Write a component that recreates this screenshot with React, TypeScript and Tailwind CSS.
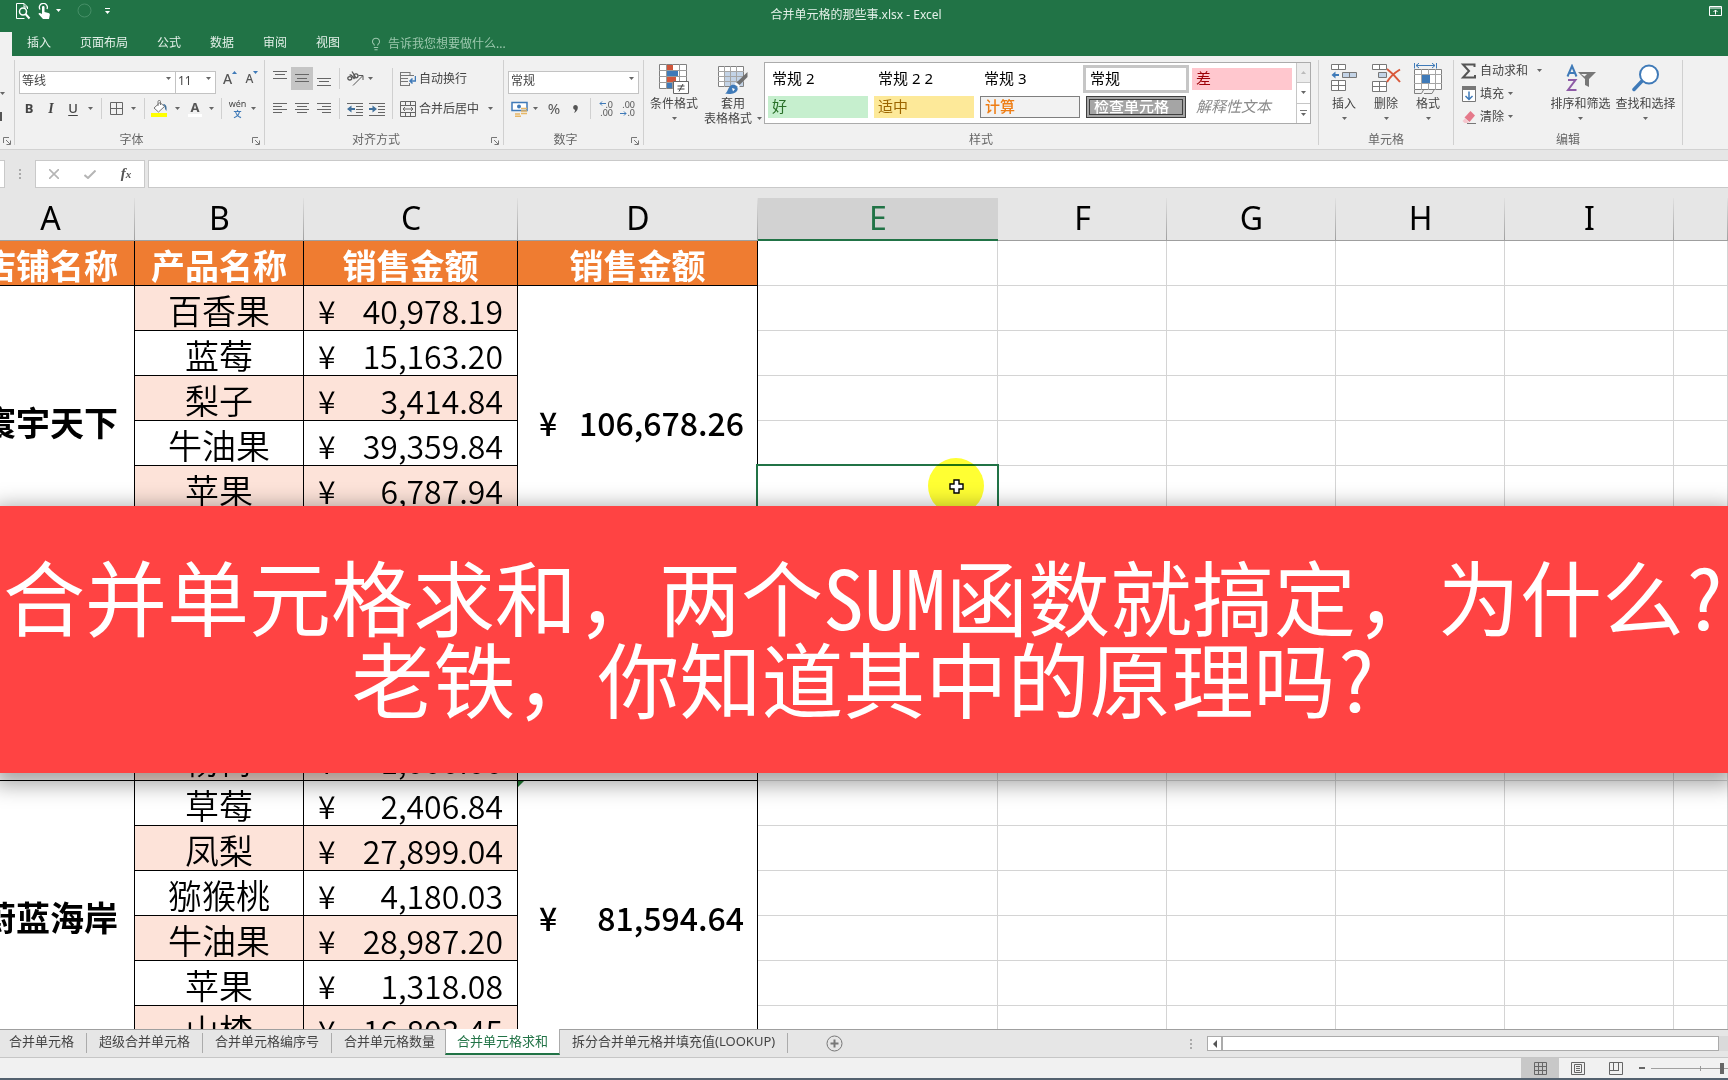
import type { ReactNode } from "react";
import { Lightbulb } from "lucide-react";

/* ---------- shared bits ---------- */

function Caret({ className = "text-[#666]" }: { className?: string }) {
  return (
    <svg width="5" height="3" viewBox="0 0 5 3" className={`shrink-0 ${className}`} aria-hidden="true">
      <path d="M0 0h5L2.5 3z" fill="currentColor" />
    </svg>
  );
}

function Tool({ label, className, children }: { label: string; className: string; children: ReactNode }) {
  return (
    <button type="button" aria-label={label} className={`flex h-[23px] shrink-0 items-center justify-center ${className}`}>
      {children}
    </button>
  );
}

const Divider = ({ className = "" }: { className?: string }) => (
  <div className={`my-px w-px shrink-0 self-stretch bg-[#d0d0d0] ${className}`} />
);

const GroupEdge = () => <div className="mt-1 mb-1 w-px shrink-0 bg-[#d0d0d0]" />;

function Group({
  label,
  launcher = false,
  className,
  children,
}: {
  label: string;
  launcher?: boolean;
  className: string;
  children: ReactNode;
}) {
  return (
    <section aria-label={label} className={`flex shrink-0 flex-col ${className}`}>
      <div className="flex-1">{children}</div>
      <div className={`relative mb-px h-4 text-center text-xs leading-4 text-[#666] ${launcher ? "pr-4" : ""}`}>
        {label}
        {launcher && (
          <button type="button" aria-label={`${label}设置`} className="absolute right-1 bottom-[3px]">
            <Launcher />
          </button>
        )}
      </div>
    </section>
  );
}

function Launcher() {
  return (
    <svg width="8" height="8" viewBox="0 0 8 8" fill="none" stroke="#777" aria-hidden="true">
      <path d="M.5 6V.5H6M3 3l4 4M7.5 3.5v4h-4" />
    </svg>
  );
}

function Drop({ label, value, options, className }: { label: string; value: string; options: string[]; className: string }) {
  return (
    <div className={`relative h-[23px] shrink-0 ${className}`}>
      <select
        aria-label={label}
        defaultValue={value}
        className="h-full w-full appearance-none border border-[#c3c3c3] bg-white pb-[2px] pl-[2px] text-xs text-[#444] outline-none"
      >
        {options.map((o) => (
          <option key={o}>{o}</option>
        ))}
      </select>
      <span className="pointer-events-none absolute top-[10px] right-[5px] flex">
        <Caret />
      </span>
    </div>
  );
}

function BigTool({ lines, width, icon }: { lines: string[]; width: string; icon: ReactNode }) {
  return (
    <button type="button" className={`flex shrink-0 flex-col items-center pt-2 text-xs leading-[15px] text-[#444] ${width}`}>
      <span className="mb-[2px] flex h-[30px] items-start justify-center">{icon}</span>
      <span className="whitespace-nowrap">{lines[0]}</span>
      <span className="flex h-[15px] items-center gap-[5px] whitespace-nowrap">
        {lines[1]}
        <Caret />
      </span>
    </button>
  );
}

/* ---------- icons ---------- */

function Lines({ rows }: { rows: [number, number, number][] }) {
  return (
    <svg width="14" height="15" viewBox="0 0 14 15" stroke="#666" aria-hidden="true">
      {rows.map(([y, a, b]) => (
        <path key={y} d={`M${a} ${y}.5H${b}`} />
      ))}
    </svg>
  );
}

function IndentIcon({ flip = false }: { flip?: boolean }) {
  return (
    <svg width="17" height="14" viewBox="0 0 17 14" fill="none" aria-hidden="true">
      <path d="M0 1.5h16M9 4.5h7M9 7.5h7M9 10.5h7M0 13.5h16" stroke="#666" />
      {flip ? (
        <path d="M0 6h3.500V3.500L8 7l-4.500 3.500V8H0z" fill="#41719c" />
      ) : (
        <path d="M8 6H4.500V3.500L0 7l4.500 3.500V8H8z" fill="#41719c" />
      )}
    </svg>
  );
}

function CondFormatIcon() {
  return (
    <svg width="30" height="30" viewBox="0 0 30 30" aria-hidden="true">
      <path d="M.5.5h27v24H.5z" fill="#fff" stroke="#808080" />
      <path d="M7.500 0v25M13.500 0v25M20.500 0v25M0 6.500h28M0 12.500h28M0 18.500h28" stroke="#9a9a9a" fill="none" />
      <path d="M8 1h6v5H8zM8 13h9v5H8z" fill="#d0563b" />
      <path d="M8 7h11v5H8zM8 19h5v5H8z" fill="#3f7ab8" />
      <path d="M14.500 17.500h15v12h-15z" fill="#fff" stroke="#666" />
      <path d="M18.500 22h7M18.500 25h7M24 20l-4 7.500" stroke="#444" fill="none" />
    </svg>
  );
}

function TableFormatIcon() {
  return (
    <svg width="30" height="30" viewBox="0 0 30 30" aria-hidden="true">
      <path d="M.5 2.500h25v20H.5z" fill="#fff" stroke="#808080" />
      <path d="M7 8h18v14H7z" fill="#c3d3e6" />
      <path d="M6.500 2v21M12.500 2v21M18.500 2v21M0 7.500h26M0 12.500h26M0 17.500h26" stroke="#a5a5a5" fill="none" />
      <path d="M29.500 8v5l-8 8-3-2.500z" fill="#707070" />
      <path d="M18 18.500l4 3.500-1.500 1.500-4-3.500z" fill="#fff" />
      <path d="M7 29.500c3-1 2.500-6 6.500-8.500 4-1 7 2 6 5-1.500 4-8 4.500-12.500 3.500z" fill="#3f7ab8" />
      <path d="M14 24l3 1-2 2.500z" fill="#fff" />
    </svg>
  );
}

function InsertIcon() {
  return (
    <svg width="28" height="28" viewBox="0 0 28 28" aria-hidden="true">
      <path d="M1.500.5h14v5h-14zM8.500.5v5M1.500 16.500h14v10h-14zM8.500 16.500v10M1.500 21.500h14" fill="#fff" stroke="#777" />
      <path d="M12.500 8.500h14v5h-14zM19.500 8.500v5" fill="#c3d3e6" stroke="#777" />
      <path d="M1.500 11l4-3.500v2.500H9v2H5.500v2.500z" fill="#3f7ab8" />
    </svg>
  );
}

function DeleteIcon() {
  return (
    <svg width="30" height="29" viewBox="0 0 30 29" aria-hidden="true">
      <path d="M1.500.5h14v5h-14zM8.500.5v5M1.500 17.500h14v10h-14zM8.500 17.500v10M1.500 22.500h14" fill="#fff" stroke="#777" />
      <path d="M7.500 8.500h8v5h-8z" fill="#c3d3e6" stroke="#777" />
      <path d="M16 5c4 3 9 8 13 13M29 5.500C24 8.500 19 13 16 18" fill="none" stroke="#d9593b" strokeWidth="2" />
    </svg>
  );
}

function FormatIcon() {
  return (
    <svg width="28" height="31" viewBox="0 0 28 31" className="-mt-px" fill="none" aria-hidden="true">
      <path d="M.5 0v5.500M22.500 0v5.500M2 2.500h19M5 .2L2 2.500l3 2.500M18 .2l3 2.300-3 2.500" stroke="#3f7ab8" />
      <path d="M.5 6.500h27v20H.5z" fill="#fff" stroke="#808080" />
      <path d="M7.500 6v21M14.500 6v21M21.500 6v21M0 11.500h28M0 20.500h28" stroke="#a5a5a5" />
      <path d="M8 12h8v8H8z" fill="#3f7ab8" />
      <path d="M.5 27v3.500h7l2-3.500M10 30.500h8l2-3.500" stroke="#808080" />
    </svg>
  );
}

function SortFilterIcon() {
  return (
    <svg width="30" height="28" viewBox="0 0 30 28" fill="none" aria-hidden="true">
      <path d="M1.500 12.500L6 2l4.500 10.500M3.200 9h5.800" stroke="#3f7ab8" strokeWidth="2" />
      <path d="M2 16h7.500L2 26h8.500" stroke="#8e5ba6" strokeWidth="2" />
      <path d="M12 8h18l-7 7v8l-4-2v-6z" fill="#777" />
      <path d="M15 10h6l-2.500 2.500z" fill="#efefef" />
    </svg>
  );
}

function FindIcon() {
  return (
    <svg width="28" height="28" viewBox="0 0 28 28" aria-hidden="true">
      <path d="M10 17L2 25.500" stroke="#3f7ab8" strokeWidth="3.500" strokeLinecap="round" />
      <circle cx="17" cy="10.500" r="9" fill="#fff" stroke="#3f7ab8" strokeWidth="2" />
    </svg>
  );
}

/* ---------- window parts ---------- */

const menu = ["插入", "页面布局", "公式", "数据", "审阅", "视图"];

function TitleBar() {
  return (
    <header className="bg-[#217346] text-xs text-[#e3f0e8]">
      <div className="flex h-8">
        <div className="flex flex-1 items-start pt-[3px]">
          <button type="button" aria-label="打印预览" className="ml-4">
            <svg width="15" height="17" viewBox="0 0 15 17" fill="none" stroke="#fff" aria-hidden="true">
              <path d="M11.500 6V4L8 .5H.5v15h8M8 .5V4h3.500" />
              <circle cx="7" cy="8.500" r="3.500" strokeWidth="1.500" />
              <path d="M9.500 11l4 4.500" strokeWidth="2" />
            </svg>
          </button>
          <button type="button" aria-label="触摸模式" className="ml-[7px] flex items-start">
            <svg width="12" height="17" viewBox="0 0 12 17" aria-hidden="true">
              <path d="M2 6.500A4 4 0 1 1 9 6" fill="none" stroke="#fff" strokeWidth="1.300" />
              <path d="M4 4c0-1.500 2.500-1.500 2.500 0v5l4 1c1 .3 1.500 1 1.300 2L11 16H5L.5 11c0-1.500 1.500-1.500 3.500 0z" fill="#fff" />
            </svg>
            <span className="mt-[6px] ml-[6px] flex">
              <Caret className="text-white" />
            </span>
          </button>
          <svg width="15" height="15" viewBox="0 0 15 15" className="ml-4" aria-hidden="true">
            <circle cx="7.500" cy="7.500" r="6.500" fill="none" stroke="#468f67" />
          </svg>
          <button type="button" aria-label="自定义快速访问工具栏" className="mt-[5px] ml-[13px] flex flex-col gap-[2px]">
            <span className="h-px w-[5px] bg-white" />
            <Caret className="text-white" />
          </button>
        </div>
        <h1 className="mr-[10px] pt-[7px] leading-4">合并单元格的那些事.xlsx - Excel</h1>
        <div className="flex flex-1 justify-end pt-[6px] pr-[6px]">
          <button type="button" aria-label="功能区显示选项" className="self-start">
            <svg width="13" height="10" viewBox="0 0 13 10" fill="none" stroke="#fff" aria-hidden="true">
              <path d="M.5.5h12v9H.5zM0 2h13M6.500 8.500V4M4.500 6l2-2 2 2" />
            </svg>
          </button>
        </div>
      </div>
      <nav aria-label="功能区选项卡" className="flex h-6 items-stretch">
        <span className="w-3 bg-[#f1f1f1]" />
        <div className="flex items-start gap-[29px] pl-[15px]">
          {menu.map((m) => (
            <button key={m} type="button" className="text-xs leading-[22px]">
              {m}
            </button>
          ))}
          <button type="button" className="flex items-center gap-[5px] text-xs leading-6 text-[#9cc8ae]">
            <Lightbulb size={14} strokeWidth={1.800} />
            告诉我您想要做什么...
          </button>
        </div>
      </nav>
    </header>
  );
}

type CellStyle = { name: string; look: string };
const cellStyles: CellStyle[] = [
  { name: "常规 2", look: "text-black" },
  { name: "常规 2 2", look: "text-black" },
  { name: "常规 3", look: "text-black" },
  { name: "常规", look: "text-black ring-[3px] ring-[#c6c6c6]" },
  { name: "差", look: "bg-[#ffc7ce] text-[#9c0006]" },
  { name: "好", look: "bg-[#c6efce] text-[#2a7029]" },
  { name: "适中", look: "bg-[#fde999] text-[#9c6500]" },
  { name: "计算", look: "border border-[#7f7f7f] bg-[#f2f2f2] font-medium text-[#ee7d14]" },
  { name: "检查单元格", look: "border-4 border-double border-[#3f3f3f] bg-[#a5a5a5] font-medium text-white" },
  { name: "解释性文本", look: "text-[#8a8a8a] italic" },
];

function Ribbon() {
  return (
    <div role="toolbar" aria-label="功能区" className="flex h-[94px] overflow-hidden border-b border-[#d2d2d2] bg-[#f1f1f1]">
      <div className="flex w-[14px] shrink-0 flex-col">
        <span className="mt-9 flex">
          <Caret />
        </span>
        <span className="mt-[17px] h-[9px] w-[2px] bg-[#555]" />
        <button type="button" aria-label="剪贴板设置" className="mt-auto mb-1 ml-[3px] self-start">
          <Launcher />
        </button>
      </div>
      <GroupEdge />

      <Group label="字体" launcher className="w-[249px] pt-[11px] pb-0">
        <div className="flex pl-1">
          <Drop label="字体名称" value="等线" options={["等线", "宋体", "黑体"]} className="w-[157px]" />
          <Drop label="字号" value="11" options={["10", "11", "12"]} className="-ml-px w-[41px]" />
          <Tool label="增大字号" className="ml-[3px] w-[22px]">
            <span className="text-sm leading-4 font-medium text-[#555]">A</span>
            <svg width="5" height="3" viewBox="0 0 5 3" className="mb-3" aria-hidden="true">
              <path d="M0 3h5L2.500 0z" fill="#3f7ab8" />
            </svg>
          </Tool>
          <Tool label="减小字号" className="w-[22px]">
            <span className="text-xs leading-4 font-medium text-[#555]">A</span>
            <Caret className="mb-3 text-[#3f7ab8]" />
          </Tool>
        </div>
        <div className="mt-[7px] flex items-center pl-[3px] text-[13px] text-[#444]">
          <Tool label="加粗" className="w-[22px] font-bold">B</Tool>
          <Tool label="倾斜" className="w-[22px] font-['Liberation_Serif',serif] text-sm font-bold italic">I</Tool>
          <Tool label="下划线" className="w-[22px] font-medium underline underline-offset-2">U</Tool>
          <Tool label="下划线选项" className="w-[13px]"><Caret /></Tool>
          <Divider className="mr-[3px] ml-1" />
          <Tool label="边框" className="w-[22px]">
            <svg width="13" height="13" viewBox="0 0 13 13" fill="none" stroke="#666" aria-hidden="true">
              <path d="M.5.5h12v12H.5zM6.500 0v13M0 6.500h13" />
            </svg>
          </Tool>
          <Tool label="边框选项" className="w-[13px]"><Caret /></Tool>
          <Divider className="mr-[3px] ml-1" />
          <Tool label="填充颜色" className="w-[23px]">
            <svg width="17" height="17" viewBox="0 0 17 17" aria-hidden="true">
              <path d="M9 2.500L3 8l4.500 4 6-5.500z" fill="#fff" stroke="#777" />
              <path d="M7 6V1.500C7 0 9.500 0 9.500 1.500V5" fill="none" stroke="#777" />
              <path d="M12 4c3 0 4 2 3.500 7-1.500-1-1.500-3-2-5z" fill="#41719c" />
              <path d="M0 13h16v4H0z" fill="#ffff00" />
            </svg>
          </Tool>
          <Tool label="填充颜色选项" className="w-3"><Caret /></Tool>
          <Tool label="字体颜色" className="w-6 flex-col">
            <span className="text-[13px] leading-[14px] font-bold text-[#555]">A</span>
            <span className="h-[3px] w-[14px] bg-white" />
          </Tool>
          <Tool label="字体颜色选项" className="w-2"><Caret /></Tool>
          <Divider className="mr-[3px] ml-[6px]" />
          <Tool label="拼音指南" className="w-[25px] flex-col">
            <span className="text-[9px] leading-[10px]">wén</span>
            <span className="text-[8px] leading-[9px] font-bold text-[#3f7ab8]">文</span>
          </Tool>
          <Tool label="拼音选项" className="w-[7px]"><Caret /></Tool>
        </div>
      </Group>
      <GroupEdge />

      <Group label="对齐方式" launcher className="w-[238px] pt-[11px]">
        <div className="flex pl-1">
          <div className="flex flex-col gap-[7px]">
            <div className="flex">
              <Tool label="顶端对齐" className="w-[22px]"><Lines rows={[[0, 0, 14], [3, 2, 12], [7, 0, 14]]} /></Tool>
              <Tool label="垂直居中" className="w-[22px] bg-[#c5c5c5]"><Lines rows={[[3, 0, 14], [7, 2, 12], [10, 0, 14]]} /></Tool>
              <Tool label="底端对齐" className="w-[22px]"><Lines rows={[[7, 0, 14], [10, 2, 12], [14, 0, 14]]} /></Tool>
              <Divider className="mx-1" />
              <Tool label="方向" className="w-[22px]">
                <svg width="17" height="15" viewBox="0 0 17 15" fill="none" stroke="#555" aria-hidden="true">
                  <g strokeWidth="1.300">
                    <ellipse cx="2.800" cy="7.300" rx="2" ry="1.700" />
                    <path d="M2.500 4.300c1.500-.8 2.200 0 3 1.200l2 2.500" />
                    <circle cx="9" cy="4.800" r="2" />
                    <path d="M5 .5L8.500 6" />
                  </g>
                  <path d="M6 14.500L15.500 5M11.500 4.500h4.500V9" />
                </svg>
              </Tool>
              <Tool label="方向选项" className="w-2"><Caret /></Tool>
            </div>
            <div className="flex">
              <Tool label="左对齐" className="w-[22px]"><Lines rows={[[2, 0, 14], [5, 0, 9], [8, 0, 14], [11, 0, 9]]} /></Tool>
              <Tool label="居中" className="w-[22px]"><Lines rows={[[2, 0, 14], [5, 2, 12], [8, 0, 14], [11, 2, 12]]} /></Tool>
              <Tool label="右对齐" className="w-[22px]"><Lines rows={[[2, 0, 14], [5, 5, 14], [8, 0, 14], [11, 5, 14]]} /></Tool>
              <Divider className="mx-1" />
              <Tool label="减少缩进量" className="w-[22px]"><IndentIcon /></Tool>
              <Tool label="增加缩进量" className="w-[22px]"><IndentIcon flip /></Tool>
            </div>
          </div>
          <Divider className="ml-1" />
          <div className="flex flex-col gap-[7px] pl-[7px] text-xs text-[#444]">
            <button type="button" className="flex h-[23px] items-center gap-[3px]">
              <svg width="16" height="16" viewBox="0 0 16 16" fill="none" aria-hidden="true">
                <path d="M.5 1v14M0 1.500h10M0 4.500h14M0 7.500h8M0 10.500h8M0 14.500h10M10 1v3.500M9.500 12v3" stroke="#777" />
                <path d="M15.500 5v5H10M12.500 7.500L10 10l2.500 2.500" stroke="#3f7ab8" strokeWidth="1.500" />
              </svg>
              自动换行
            </button>
            <button type="button" className="flex h-[23px] items-center gap-[3px]">
              <svg width="16" height="16" viewBox="0 0 16 16" fill="none" stroke="#666" aria-hidden="true">
                <path d="M.5.5h15v15H.5zM0 4.500h16M0 11.500h16M5.500 0v4M10.500 0v4M5.500 12v4M10.500 12v4" />
                <path d="M3 8h10M5 6L3 8l2 2M11 6l2 2-2 2" />
              </svg>
              合并后居中
              <span className="ml-[6px] flex"><Caret /></span>
            </button>
          </div>
        </div>
      </Group>
      <GroupEdge />

      <Group label="数字" launcher className="w-[139px] pt-[11px]">
        <div className="pl-1">
          <Drop label="数字格式" value="常规" options={["常规", "数字", "货币"]} className="w-[131px]" />
          <div className="mt-[7px] flex text-[#555]">
            <Tool label="会计数字格式" className="w-[22px]">
              <svg width="17" height="16" viewBox="0 0 17 16" fill="none" aria-hidden="true">
                <path d="M1 1.500h15v8H1z" fill="#fff" stroke="#3f7ab8" strokeWidth="1.500" />
                <circle cx="8" cy="5.500" r="2" fill="#3f7ab8" />
                <path d="M10 7.500h6M10 10h6M10 12.500h6M4 13h5M4 15.200h6" stroke="#e8b765" strokeWidth="1.600" />
              </svg>
            </Tool>
            <Tool label="会计格式选项" className="w-[11px]"><Caret /></Tool>
            <Tool label="百分比样式" className="ml-[2px] w-[22px] text-[15px]">%</Tool>
            <Tool label="千位分隔样式" className="w-5">
              <svg width="5" height="8" viewBox="0 0 5 8" aria-hidden="true">
                <path d="M2.500 0C4 0 5 1 4.800 3 4.500 5.500 3 7 1 8c.8-1.200 1.200-2.200 1-3.200C-.6 4.600-.4 0 2.500 0z" fill="#555" />
              </svg>
            </Tool>
            <Divider className="mr-1 ml-[5px]" />
            <Tool label="增加小数位数" className="relative w-[21px] flex-col text-[9px] leading-[8px]">
              <span className="self-end pr-[3px]">.0</span>
              <span className="self-end pr-[3px]">.00</span>
              <svg width="7" height="5" viewBox="0 0 7 5" className="absolute top-1 left-1" fill="none" stroke="#3f7ab8" aria-hidden="true">
                <path d="M7 2.500H1M3 .5l-2 2 2 2" />
              </svg>
            </Tool>
            <Tool label="减少小数位数" className="relative w-[22px] flex-col text-[9px] leading-[8px]">
              <span className="self-end pr-[3px]">.00</span>
              <span className="self-end pr-[3px]">.0</span>
              <svg width="7" height="5" viewBox="0 0 7 5" className="absolute bottom-1 left-1" fill="none" stroke="#3f7ab8" aria-hidden="true">
                <path d="M0 2.500h6M4 .5l2 2-2 2" />
              </svg>
            </Tool>
          </div>
        </div>
      </Group>
      <GroupEdge />

      <Group label="样式" className="w-[674px]">
        <div className="flex items-start pl-[2px]">
          <BigTool lines={["条件格式"]} width="w-14" icon={<CondFormatIcon />} />
          <BigTool lines={["套用", "表格格式"]} width="w-[62px]" icon={<TableFormatIcon />} />
          <div className="mt-[6px] flex border border-[#ababab] bg-white">
            <div className="grid grid-cols-[repeat(5,100px)] gap-[6px] py-[5px] pr-1 pl-[3px]">
              {cellStyles.map((s) => (
                <button
                  key={s.name}
                  type="button"
                  className={`flex h-[22px] items-center overflow-hidden pb-[2px] pl-1 text-left text-[15px] leading-5 whitespace-nowrap ${s.look}`}
                >
                  {s.name}
                </button>
              ))}
            </div>
            <div className="flex w-[14px] flex-col divide-y divide-[#c6c6c6] border-l border-[#c6c6c6]">
              <button type="button" aria-label="向上" className="flex flex-1 items-center justify-center bg-[#ececec]">
                <svg width="5" height="3" viewBox="0 0 5 3" aria-hidden="true"><path d="M0 3h5L2.500 0z" fill="#bbb" /></svg>
              </button>
              <button type="button" aria-label="向下" className="flex flex-1 items-center justify-center"><Caret /></button>
              <button type="button" aria-label="其他样式" className="flex flex-1 flex-col items-center justify-center gap-[2px]">
                <span className="h-px w-[7px] bg-[#777]" />
                <Caret />
              </button>
            </div>
          </div>
        </div>
      </Group>
      <GroupEdge />

      <Group label="单元格" className="w-[134px]">
        <div className="flex pl-1">
          <BigTool lines={["插入"]} width="w-[42px]" icon={<InsertIcon />} />
          <BigTool lines={["删除"]} width="w-[42px]" icon={<DeleteIcon />} />
          <BigTool lines={["格式"]} width="w-[42px]" icon={<FormatIcon />} />
        </div>
      </Group>
      <GroupEdge />

      <Group label="编辑" className="w-[228px]">
        <div className="flex pl-[5px] text-xs text-[#444]">
          <div className="flex w-[89px] flex-col pt-[3px]">
            <button type="button" className="flex h-[23px] items-center gap-[3px]">
              <svg width="18" height="16" viewBox="0 0 18 16" aria-hidden="true">
                <path d="M15.500 4V1.500H4l6 6.500-6 6.500h12V12" fill="none" stroke="#555" strokeWidth="2" />
              </svg>
              自动求和
              <span className="ml-[6px] flex"><Caret /></span>
            </button>
            <button type="button" className="flex h-[23px] items-center gap-[3px]">
              <svg width="18" height="16" viewBox="0 0 18 16" fill="none" aria-hidden="true">
                <path d="M3.500.5h13v15h-13z" fill="#fff" stroke="#777" />
                <path d="M3 0h14v4H3z" fill="#777" />
                <path d="M10 5.500v8M6.500 10l3.500 3.500 3.500-3.500" stroke="#3f7ab8" strokeWidth="1.500" />
              </svg>
              填充
              <span className="ml-px flex"><Caret /></span>
            </button>
            <button type="button" className="flex h-[23px] items-center gap-[3px]">
              <svg width="18" height="14" viewBox="0 0 18 14" aria-hidden="true">
                <path d="M6 8.500l4 4L8.500 13h-3L3.500 11z" fill="#f6c6cd" />
                <path d="M11.500 1L16 5.500 10.500 12l-5-4.500z" fill="#e5798a" />
                <path d="M8 13.500h9" stroke="#777" />
              </svg>
              清除
              <span className="ml-px flex"><Caret /></span>
            </button>
          </div>
          <BigTool lines={["排序和筛选"]} width="w-[65px]" icon={<SortFilterIcon />} />
          <BigTool lines={["查找和选择"]} width="w-[65px]" icon={<FindIcon />} />
        </div>
      </Group>
      <GroupEdge />
    </div>
  );
}

function FormulaBar() {
  return (
    <div className="flex h-12 items-center bg-[#e6e6e6]">
      <input aria-label="名称框" className="h-7 w-[5px] border border-l-0 border-[#c9c9c9] bg-white" />
      <div className="ml-[14px] flex flex-col gap-[2px]">
        <span className="size-[2px] bg-[#aaa]" />
        <span className="size-[2px] bg-[#aaa]" />
        <span className="size-[2px] bg-[#aaa]" />
      </div>
      <div className="ml-[14px] flex h-7 w-[110px] items-center border border-[#c9c9c9] bg-white">
        <button type="button" aria-label="取消" className="flex flex-1 justify-center">
          <svg width="10" height="10" viewBox="0 0 10 10" stroke="#b5b5b5" strokeWidth="1.600" aria-hidden="true">
            <path d="M0 0l10 10M10 0L0 10" />
          </svg>
        </button>
        <button type="button" aria-label="输入" className="flex flex-1 justify-center">
          <svg width="12" height="9" viewBox="0 0 12 9" fill="none" stroke="#b5b5b5" strokeWidth="2" aria-hidden="true">
            <path d="M.5 5l3.500 3L11.500.5" />
          </svg>
        </button>
        <button
          type="button"
          aria-label="插入函数"
          className="flex flex-1 items-baseline justify-center pb-[2px] font-['Liberation_Serif',serif] text-[15px] leading-5 font-bold text-[#555] italic"
        >
          f<span className="text-[11px]">x</span>
        </button>
      </div>
      <input aria-label="编辑栏" className="ml-[3px] h-7 flex-1 border border-r-0 border-[#c9c9c9] bg-white px-2 text-sm outline-none" />
    </div>
  );
}

/* ---------- worksheet ---------- */

type Row = { fruit: string; amount: string };
type Store = { name: string; total: string; rows: Row[] };

const stores: Store[] = [
  {
    name: "寰宇天下",
    total: "106,678.26",
    rows: [
      { fruit: "百香果", amount: "40,978.19" },
      { fruit: "蓝莓", amount: "15,163.20" },
      { fruit: "梨子", amount: "3,414.84" },
      { fruit: "牛油果", amount: "39,359.84" },
      { fruit: "苹果", amount: "6,787.94" },
      { fruit: "", amount: "" },
    ],
  },
  {
    name: "",
    total: "",
    rows: [
      { fruit: "", amount: "" },
      { fruit: "", amount: "" },
      { fruit: "", amount: "" },
      { fruit: "", amount: "" },
      { fruit: "杨梅", amount: "1,000.00" },
    ],
  },
  {
    name: "蔚蓝海岸",
    total: "81,594.64",
    rows: [
      { fruit: "草莓", amount: "2,406.84" },
      { fruit: "凤梨", amount: "27,899.04" },
      { fruit: "猕猴桃", amount: "4,180.03" },
      { fruit: "牛油果", amount: "28,987.20" },
      { fruit: "苹果", amount: "1,318.08" },
      { fruit: "山楂", amount: "16,803.45" },
    ],
  },
];

const lines = stores.flatMap((store, s) => store.rows.map((row, i) => ({ store, s, row, first: i === 0 })));
const freeColumns = ["E", "F", "G", "H", "I", "J"];

function Money({ value, bold = false }: { value: string; bold?: boolean }) {
  if (!value) return null;
  return (
    <div className={bold ? "flex justify-between pr-[13px] pl-[21px] font-medium" : "flex justify-between px-[14px] font-[350]"}>
      <span>¥</span>
      <span>{value}</span>
    </div>
  );
}

function Sheet() {
  return (
    <main className="relative min-h-0 flex-1 overflow-hidden bg-white font-['Noto_Sans_CJK_SC',sans-serif] text-black">
      <table className="-ml-[34px] w-[calc(100%+34px)] table-fixed border-separate border-spacing-0">
        <colgroup>
          <col className="w-[169px]" />
          <col className="w-[169px]" />
          <col className="w-[214px]" />
          <col className="w-[240px]" />
          <col className="w-[240px]" />
          <col className="w-[169px]" />
          <col className="w-[169px]" />
          <col className="w-[169px]" />
          <col className="w-[169px]" />
          <col />
        </colgroup>
        <thead className="font-['Noto_Sans',sans-serif] text-[32px] leading-9">
          <tr>
            {["A", "B", "C", "D", ...freeColumns].map((c) => (
              <th
                key={c}
                scope="col"
                className={
                  c === "E"
                    ? "h-[43px] border-b-2 border-[#217346] bg-[#d2d2d2] p-0 pb-px font-normal text-[#217346]"
                    : "h-[43px] border-b border-[#9f9f9f] bg-[#e6e6e6] bg-[linear-gradient(#e0e0e0,#a0a0a0)] bg-[length:1px_100%] bg-right bg-no-repeat p-0 pb-[2px] font-normal"
                }
              >
                {c === "J" ? "" : c}
              </th>
            ))}
          </tr>
        </thead>
        <tbody>
          <tr className="text-[34px] leading-9 text-white">
            {["店铺名称", "产品名称", "销售金额", "销售金额"].map((h, i) => (
              <th
                key={i}
                scope="col"
                className="h-[45px] border-r border-b border-black bg-[#ef7c31] p-0 pt-1 text-center font-bold whitespace-nowrap"
              >
                {h}
              </th>
            ))}
            {freeColumns.map((c) => (
              <td key={c} className="border-r border-b border-[#d4d4d4] p-0" />
            ))}
          </tr>
          {lines.map(({ store, s, row, first }, n) => {
            const shade = n % 2 === 0 ? "bg-[#fde3d9]" : "bg-white";
            return (
              <tr key={n} className="text-[32px] leading-9">
                {first && (
                  <td
                    rowSpan={store.rows.length}
                    className="border-r border-b border-black p-0 pt-[3px] text-center text-[34px] font-bold whitespace-nowrap"
                  >
                    {store.name}
                  </td>
                )}
                <td className={`h-[45px] border-r border-b border-black p-0 pt-1 text-center text-[34px] font-[350] ${shade}`}>
                  {row.fruit}
                </td>
                <td className={`h-[45px] border-r border-b border-black p-0 pt-[3px] ${shade}`}>
                  <Money value={row.amount} />
                </td>
                {first && (
                  <td rowSpan={store.rows.length} className="relative border-r border-b border-black p-0 pt-[3px]">
                    {s === 2 && (
                      <svg width="6" height="6" viewBox="0 0 6 6" className="absolute top-0 left-0" aria-hidden="true">
                        <path d="M0 0h6L0 6z" fill="#1f7a33" />
                      </svg>
                    )}
                    <Money value={store.total} bold />
                  </td>
                )}
                {freeColumns.map((c) => (
                  <td key={c} className="relative border-r border-b border-[#d4d4d4] p-0">
                    {c === "E" && n === 4 && (
                      <>
                        <span className="absolute -inset-x-[2px] -top-[2px] -bottom-[2px] border-2 border-[#217346]" />
                        <span className="absolute -top-2 left-[170px] size-14 rounded-full bg-[#ffff33] mix-blend-multiply" />
                        <svg width="15" height="15" viewBox="0 0 15 15" className="absolute top-[13px] left-[191px]" aria-hidden="true">
                          <path d="M5 1h5v4h4v5h-4v4H5v-4H1V5h4z" fill="#fff" stroke="#000" strokeWidth="1.400" />
                        </svg>
                      </>
                    )}
                  </td>
                ))}
              </tr>
            );
          })}
        </tbody>
      </table>

      <div className="absolute inset-x-0 top-[308px] z-10 h-[267px] bg-[#ff4343] pt-12 text-center font-['Noto_Sans_Mono_CJK_SC','Noto_Sans_CJK_SC',monospace] text-[82px] leading-[82px] whitespace-nowrap text-white shadow-[0_6px_20px_6px_rgba(0,0,0,0.35)]">
        <p>合并单元格求和，两个SUM函数就搞定，为什么?</p>
        <p>老铁，你知道其中的原理吗?</p>
      </div>
    </main>
  );
}

const sheets = [
  "合并单元格",
  "超级合并单元格",
  "合并单元格编序号",
  "合并单元格数量",
  "合并单元格求和",
  "拆分合并单元格并填充值(LOOKUP)",
];
const active = 4;

function SheetTabs() {
  return (
    <div className="flex h-[29px] shrink-0 border-y border-t-[#9f9f9f] border-b-[#c6c6c6] bg-[#e6e6e6] text-[13px] text-[#444]">
      <div role="tablist" aria-label="工作表" className="-ml-[3px] flex">
        {sheets.map((s, i) => (
          <button
            key={s}
            type="button"
            role="tab"
            aria-selected={i === active}
            className={
              i === active
                ? "-mt-px mb-[2px] border-x border-b-2 border-x-[#ababab] border-b-[#217346] bg-white px-[11px] leading-[25px] whitespace-nowrap text-[#217346]"
                : i === active - 1
                  ? "mt-[3px] mb-1 pr-[10px] pb-[3px] pl-3 leading-[17px] whitespace-nowrap"
                  : "mt-[3px] mb-1 border-r border-[#ababab] px-3 pb-[3px] leading-[17px] whitespace-nowrap"
            }
          >
            {s}
          </button>
        ))}
      </div>
      <button type="button" aria-label="新工作表" className="ml-[38px] self-center">
        <svg width="17" height="17" viewBox="0 0 17 17" fill="none" stroke="#777" aria-hidden="true">
          <circle cx="8.500" cy="8.500" r="7.500" />
          <path d="M8.500 4.500v8M4.500 8.500h8" strokeWidth="2" />
        </svg>
      </button>
      <div className="ml-auto flex items-center">
        <div className="mr-[15px] flex flex-col gap-[2px]">
          <span className="size-[2px] bg-[#aaa]" />
          <span className="size-[2px] bg-[#aaa]" />
          <span className="size-[2px] bg-[#aaa]" />
        </div>
        <button type="button" aria-label="向左滚动" className="flex h-[15px] w-[15px] items-center justify-center border border-[#ababab] bg-white">
          <svg width="4" height="8" viewBox="0 0 4 8" aria-hidden="true"><path d="M4 0v8L0 4z" fill="#555" /></svg>
        </button>
        <div className="h-[15px] w-[497px] border border-[#ababab] bg-white" />
        <span className="h-[15px] w-[9px] bg-[#dadada]" />
      </div>
    </div>
  );
}

function StatusBar() {
  return (
    <footer className="flex h-[22px] shrink-0 items-stretch justify-end border-b-2 border-[#53616f] bg-[#f1f1f1]">
      <button type="button" aria-label="普通" className="flex w-[38px] items-center justify-center bg-[#c8c8c8]">
        <svg width="13" height="13" viewBox="0 0 13 13" fill="none" stroke="#666" aria-hidden="true">
          <path d="M.5.5h12v12H.5zM4.500 0v13M8.500 0v13M0 4.500h13M0 8.500h13" />
        </svg>
      </button>
      <button type="button" aria-label="页面布局视图" className="flex w-[38px] items-center justify-center">
        <svg width="14" height="13" viewBox="0 0 14 13" fill="none" stroke="#666" aria-hidden="true">
          <path d="M.5.5h13v12H.5zM3.500 2.500h7v8h-7zM5 4.500h4M5 6.500h4M5 8.500h4" />
        </svg>
      </button>
      <button type="button" aria-label="分页预览" className="flex w-[38px] items-center justify-center">
        <svg width="14" height="13" viewBox="0 0 14 13" fill="none" stroke="#666" aria-hidden="true">
          <path d="M.5.5h13v12H.5zM4.500 0v8M9.500 0v8M0 8.500h10" />
        </svg>
      </button>
      <button type="button" aria-label="缩小" className="mr-1 ml-[2px] flex w-[10px] items-center justify-center">
        <span className="h-[2px] w-[6px] bg-[#666]" />
      </button>
      <div className="relative flex w-[77px] items-center">
        <span className="absolute left-[49px] h-[5px] w-px bg-[#999]" />
        <input
          type="range"
          aria-label="缩放比例"
          defaultValue={95}
          className="h-3 w-full appearance-none bg-[linear-gradient(#a0a0a0,#a0a0a0)] bg-[length:100%_1px] bg-center bg-no-repeat [&::-webkit-slider-thumb]:h-[11px] [&::-webkit-slider-thumb]:w-1 [&::-webkit-slider-thumb]:appearance-none [&::-webkit-slider-thumb]:bg-[#666]"
        />
      </div>
    </footer>
  );
}

export default function App() {
  return (
    <div className="flex h-screen flex-col overflow-hidden bg-[#e6e6e6] font-['Noto_Sans','Noto_Sans_CJK_SC',sans-serif]">
      <TitleBar />
      <Ribbon />
      <FormulaBar />
      <Sheet />
      <SheetTabs />
      <StatusBar />
    </div>
  );
}
